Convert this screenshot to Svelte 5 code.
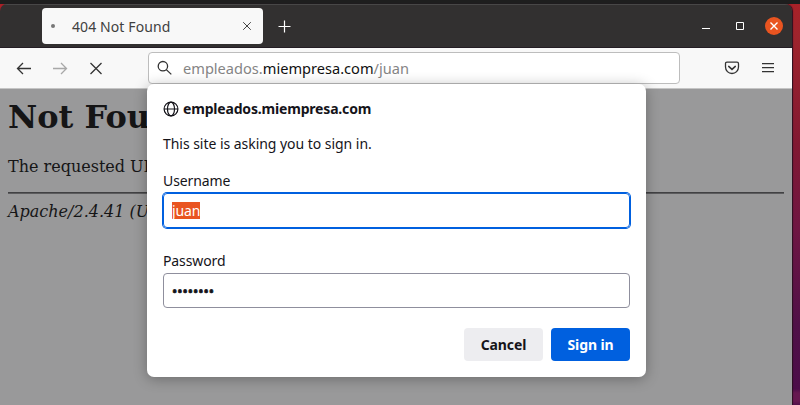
<script>
  let username = $state('juan');
  const password = '••••••••';
</script>

<div class="desktop">
  <div class="panel"></div>
  <div class="wallpaper">
    <div class="window">
      <header class="titlebar">
        <div class="tab">
          <span class="loading"></span>
          <span class="tab-title">404 Not Found</span>
          <svg class="tab-close" width="10" height="10" viewBox="0 0 10 10"><path d="M1.200 1.200l7.600 7.600M8.800 1.200l-7.600 7.600" stroke="#444" stroke-width="1" fill="none" /></svg>
        </div>
        <svg class="plus" width="13" height="13" viewBox="0 0 13 13"><path d="M6.500 .5v12M.5 6.500h12" stroke="#fff" stroke-width="1.2" /></svg>
        <div class="controls">
          <svg width="8" height="8" viewBox="0 0 8 8"><path d="M0 6.500h8" stroke="#fff" /></svg>
          <svg width="8" height="8" viewBox="0 0 8 8"><path d="M.5 .5h7v7h-7z" stroke="#fff" fill="none" /></svg>
          <span class="close"><svg width="8" height="8" viewBox="0 0 8 8"><path d="M.5 .5l7 7M7.500 .5l-7 7" stroke="#fff" stroke-width="1.4" /></svg></span>
        </div>
      </header>
      <nav class="toolbar">
        <div class="nav-icons">
          <svg width="16" height="14" viewBox="0 0 16 14"><path d="M15 7.500H1.500M7 2L1.500 7.500L7 13" /></svg>
          <svg class="faded" width="16" height="14" viewBox="0 0 16 14"><path d="M1 7.500h13.500M9 2L14.500 7.500L9 13" /></svg>
          <svg width="14" height="14" viewBox="0 0 14 14"><path d="M1.500 2l11 11M12.500 2L1.500 13" /></svg>
        </div>
        <div class="address">
          <svg width="16" height="16" viewBox="0 0 16 16"><circle cx="5.900" cy="6.200" r="4.700" /><path d="M9.300 9.600l5 4.800" /></svg>
          <span class="url">empleados.<b>miempresa.com</b>/juan</span>
        </div>
        <div class="tools">
          <svg width="16" height="14" viewBox="0 0 16 14"><path d="M3 1.200h10q1.500 0 1.500 1.500V6a6.500 6.500 0 0 1-13 0V2.700q0-1.500 1.500-1.500z" /><path d="M4.700 5.400L8 8.400l3.300-3" stroke-width="1.500" stroke-linecap="round" /></svg>
          <svg width="12" height="10" viewBox="0 0 12 10"><path d="M0 .7h12M0 4.700h12M0 8.700h12" /></svg>
        </div>
      </nav>
      <main>
        <h1>Not Fou</h1>
        <p>The requested UR</p>
        <hr />
        <address>Apache/2.4.41 (U</address>
      </main>
      <section class="dialog">
        <div class="host">
          <svg width="16" height="16" viewBox="0 0 16 16"><circle cx="8" cy="8" r="6.900" /><ellipse cx="8" cy="8" rx="3.500" ry="6.900" /><path d="M1 8h14" /></svg>
          <strong>empleados.miempresa.com</strong>
        </div>
        <p class="message">This site is asking you to sign in.</p>
        <div class="label user-label">Username</div>
        <div class="field active"><span class="selected">{username}</span></div>
        <div class="label pass-label">Password</div>
        <div class="field"><span class="dots">{password}</span></div>
        <div class="actions"><button class="cancel">Cancel</button><button class="primary">Sign in</button></div>
      </section>
    </div>
  </div>
</div>

<style>
  .desktop { width: 800px; height: 405px; display: flex; flex-direction: column; overflow: hidden; font: 14px/20px "Noto Sans", "Open Sans", sans-serif; }
  .panel { height: 4px; flex: none; background: #1e1e1e; }
  .wallpaper { flex: 1; background: linear-gradient(#a92128, #9f242d 8%, #811832 35%, #6f1643 56%, #501048 80%, #4c0d49 96%, #661850 97%, #661850 99%, #50104a); }
  .window { position: relative; width: 792px; height: 401px; display: flex; flex-direction: column; box-shadow: 1px 0 1px #2a1020; border-radius: 7px 7px 0 0; overflow: hidden; }
  .titlebar { box-sizing: border-box; height: 44px; flex: none; display: flex; align-items: center; padding: 0 9px 0 42px; background: #323030; border-top: 1px solid #484747; border-bottom: 1px solid #241d24; }
  .tab { box-sizing: border-box; width: 221px; height: 36px; padding: 0 11px 0 8px; display: flex; align-items: center; background: #f8f8f8; border-radius: 4px; margin-bottom: 1px; }
  .loading { width: 4px; height: 4px; border-radius: 50%; background: #777; margin: 0 17px 0 1px; }
  .tab-title { flex: 1; color: #404040; white-space: nowrap; letter-spacing: .1px; padding-top: 2px; }
  .tab-close { margin-top: 1px; }
  .plus { margin-left: 15px; margin-top: 1px; }
  .controls { display: flex; align-items: center; gap: 26px; margin: 0 1px 1px auto; }
  .close { width: 18px; height: 18px; border-radius: 50%; background: #e95420; display: flex; align-items: center; justify-content: center; margin: 0 -1px 0 -5px; }
  .toolbar { box-sizing: border-box; height: 41px; flex: none; display: flex; align-items: center; background: #f8f8f8; border-bottom: 1px solid #c5c5c5; }
  .toolbar svg { fill: none; stroke: #333; stroke-width: 1.300; }
  .nav-icons { width: 132px; padding-left: 16px; display: flex; align-items: center; gap: 20px; }
  .nav-icons svg:last-child { margin-left: 1px; }
  .toolbar .faded { opacity: .4; }
  .address { box-sizing: border-box; width: 532px; height: 32px; border: 1px solid #bdbdbd; border-radius: 4px; display: flex; align-items: center; gap: 10px; padding-left: 8px; background: #fff; color: #858585; }
  .url { white-space: nowrap; font-size: 14.600px; }
  .url b { font-weight: 400; color: #111; }
  .tools { display: flex; align-items: center; gap: 22px; margin-left: 44px; }
  main { flex: 1; background: #99999a; padding: 0 8px; font: 16px/19px "DejaVu Serif", serif; color: #151516; }
  h1 { font-size: 32px; line-height: 37px; margin: 10px 0 21px; }
  main p { margin: 0 0 16px; }
  hr { border: 0; height: 1px; background: #414143; border-bottom: 1px solid #5c5c5e; margin: 0 0 8px; }
  address { font-style: italic; }
  .dialog { position: absolute; box-sizing: border-box; top: 80px; left: 147px; width: 499px; height: 293px; padding: 15px 16px; border-radius: 7px; background: #fff; color: #15141a; box-shadow: 0 2px 14px rgba(0,0,0,.3); }
  .host { display: flex; align-items: center; gap: 4px; height: 20px; letter-spacing: -.18px; }
  .host svg { fill: none; stroke: #15141a; stroke-width: 1.200; }
  .message { margin: 15px 0 17px; white-space: nowrap; letter-spacing: -.04px; }
  .label { height: 22px; letter-spacing: -.1px; }
  .field { box-sizing: border-box; width: 467px; height: 35px; border: 1px solid #8f8f9d; border-radius: 4px; padding: 0 8px; display: flex; align-items: center; }
  .active { border-color: #0060df; box-shadow: 0 0 0 1px #0060df; }
  .selected { background: #e95420; color: #fff; height: 17px; line-height: 17px; letter-spacing: -.15px; }
  .dots { -webkit-text-stroke: .7px #15141a; padding-top: 2px; }
  .pass-label { margin-top: 23px; }
  .actions { display: flex; justify-content: flex-end; gap: 8px; margin-top: 20px; }
  button { width: 79px; height: 33px; padding: 0; border: 0; border-radius: 4px; font: bold 14px "Noto Sans", "Open Sans", sans-serif; letter-spacing: -.1px; color: #15141a; background: #ededf0; }
  .primary { color: #fff; background: #0060df; }
</style>
